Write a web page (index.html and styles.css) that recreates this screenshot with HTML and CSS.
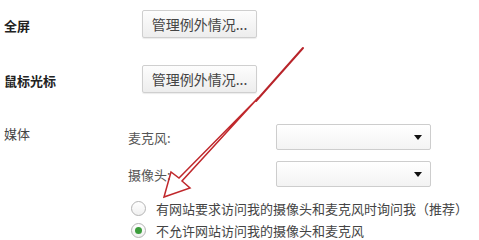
FILE: index.html
```html
<!DOCTYPE html>
<html lang="zh-CN">
<head>
    <meta charset="UTF-8">
    <title>内容设置</title>
    <link rel="stylesheet" href="styles.css">
</head>
<body>
    <div class="page">
        <div class="row">
            <div class="row-label">全屏</div>
            <button class="btn">管理例外情况...</button>
        </div>
        <div class="row row-gap">
            <div class="row-label">鼠标光标</div>
            <button class="btn">管理例外情况...</button>
        </div>
        <div class="media">
            <div class="media-label">媒体</div>
            <div class="media-body">
                <div class="field">
                    <div class="field-label">麦克风:</div>
                    <div class="select"><span class="caret"></span></div>
                </div>
                <div class="field field-gap">
                    <div class="field-label">摄像头:</div>
                    <div class="select"><span class="caret"></span></div>
                </div>
                <div class="radios">
                    <label class="radio"><span class="dot"></span>有网站要求访问我的摄像头和麦克风时询问我（推荐）</label>
                    <label class="radio"><span class="dot checked"></span>不允许网站访问我的摄像头和麦克风</label>
                </div>
            </div>
        </div>

        <svg class="arrow" width="479" height="240" viewBox="0 0 479 240">
            <line x1="303" y1="48" x2="256" y2="101" stroke="#b8242a" stroke-width="2" stroke-linecap="round"/>
            <polygon points="164,197 171,172 179,178 258,98 182,181 190,188"
                     fill="none" stroke="#c0282c" stroke-width="1.5" stroke-linejoin="miter"/>
        </svg>
    </div>
</body>
</html>
```

FILE: styles.css
```css
body, html {
    margin: 0;
    padding: 0;
    background: #fff;
    font-family: "Noto Sans CJK SC", "Noto Sans", sans-serif;
    font-size: 13px;
    color: #333;
}
.page {
    position: relative;
    width: 479px;
    height: 240px;
    padding: 10px 0 0 4px;
    box-sizing: border-box;
    overflow: hidden;
}
.row {
    display: flex;
    align-items: center;
    height: 28px;
}
.row-gap {
    margin-top: 27px;
}
.row-label {
    width: 138px;
    font-weight: bold;
    color: #222;
    position: relative;
    top: 1px;
}
.btn {
    width: 115px;
    height: 28px;
    padding: 0;
    border: 1px solid #cfcfcf;
    border-radius: 2px;
    background: linear-gradient(#fdfdfd, #ededed);
    font-family: inherit;
    font-size: 14px;
    color: #444;
    box-shadow: 0 1px 1px rgba(0, 0, 0, 0.08);
}
.media {
    display: flex;
    margin-top: 31px;
}
.media-label {
    width: 124px;
    line-height: 20px;
    color: #444;
}
.media-body {
    display: flex;
    flex-direction: column;
}
.field {
    display: flex;
    align-items: center;
    height: 26px;
}
.field-gap {
    margin-top: 11px;
}
.field-label {
    width: 148px;
    color: #555;
}
.select {
    position: relative;
    width: 155px;
    height: 26px;
    box-sizing: border-box;
    border: 1px solid #cdcdcd;
    border-radius: 2px;
    background: linear-gradient(#ffffff, #f3f3f3);
}
.caret {
    position: absolute;
    right: 8px;
    top: 10px;
    width: 0;
    height: 0;
    border-left: 4px solid transparent;
    border-right: 4px solid transparent;
    border-top: 5px solid #111;
}
.radios {
    margin-top: 10px;
}
.radio {
    display: flex;
    align-items: center;
    height: 22px;
    color: #444;
}
.dot {
    width: 15px;
    height: 15px;
    margin: 0 10px 0 3px;
    box-sizing: border-box;
    border: 1px solid #b4b4b4;
    border-radius: 50%;
    background: linear-gradient(#ffffff, #f0f0f0);
    position: relative;
}
.dot.checked::after {
    content: "";
    position: absolute;
    left: 3px;
    top: 3px;
    width: 7px;
    height: 7px;
    border-radius: 50%;
    background: #3c9d3c;
}
.arrow {
    position: absolute;
    left: 0;
    top: 0;
    pointer-events: none;
}
```
